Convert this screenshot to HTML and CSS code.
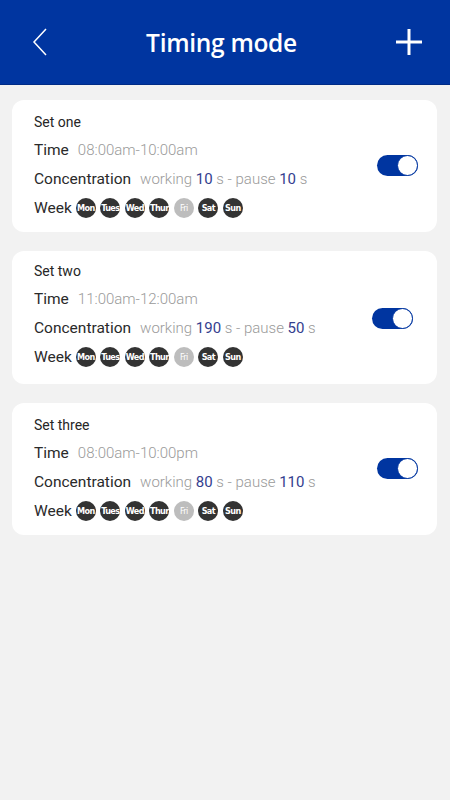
FILE: index.html
```html
<!DOCTYPE html>
<html lang="en">
<head>
    <meta charset="UTF-8">
    <meta name="viewport" content="width=device-width, initial-scale=1.0">
    <title>Timing mode</title>
    <link rel="stylesheet" href="styles.css">
</head>
<body>
    <div class="header">
        <button class="icon-btn back-btn" aria-label="Back">
            <svg width="16" height="28" viewBox="0 0 16 28">
                <polyline points="14,1 2,14 14,27" fill="none" stroke="#fff" stroke-width="1.5"/>
            </svg>
        </button>
        <h1>Timing mode</h1>
        <button class="icon-btn add-btn" aria-label="Add">
            <svg width="28" height="28" viewBox="0 0 28 28">
                <line x1="14" y1="1" x2="14" y2="27" stroke="#fff" stroke-width="3"/>
                <line x1="1" y1="14" x2="27" y2="14" stroke="#fff" stroke-width="3"/>
            </svg>
        </button>
    </div>

    <div class="list">
        <div class="set-card">
            <div class="set-info">
                <div class="set-title">Set one</div>
                <div class="row"><span class="label">Time</span><span class="value">08:00am-10:00am</span></div>
                <div class="row"><span class="label">Concentration</span><span class="value">working <b>10</b> s - pause <b>10</b> s</span></div>
                <div class="row week-row">
                    <span class="label">Week</span>
                    <div class="days">
                        <span class="day">Mon</span><span class="day">Tues</span><span class="day">Wed</span><span class="day">Thur</span><span class="day off">Fri</span><span class="day">Sat</span><span class="day">Sun</span>
                    </div>
                </div>
            </div>
            <div class="switch on"><div class="knob"></div></div>
        </div>

        <div class="set-card raised">
            <div class="set-info">
                <div class="set-title">Set two</div>
                <div class="row"><span class="label">Time</span><span class="value">11:00am-12:00am</span></div>
                <div class="row"><span class="label">Concentration</span><span class="value">working <b>190</b> s - pause <b>50</b> s</span></div>
                <div class="row week-row">
                    <span class="label">Week</span>
                    <div class="days">
                        <span class="day">Mon</span><span class="day">Tues</span><span class="day">Wed</span><span class="day">Thur</span><span class="day off">Fri</span><span class="day">Sat</span><span class="day">Sun</span>
                    </div>
                </div>
            </div>
            <div class="switch on"><div class="knob"></div></div>
        </div>

        <div class="set-card">
            <div class="set-info">
                <div class="set-title">Set three</div>
                <div class="row"><span class="label">Time</span><span class="value">08:00am-10:00pm</span></div>
                <div class="row"><span class="label">Concentration</span><span class="value">working <b>80</b> s - pause <b>110</b> s</span></div>
                <div class="row week-row">
                    <span class="label">Week</span>
                    <div class="days">
                        <span class="day">Mon</span><span class="day">Tues</span><span class="day">Wed</span><span class="day">Thur</span><span class="day off">Fri</span><span class="day">Sat</span><span class="day">Sun</span>
                    </div>
                </div>
            </div>
            <div class="switch on"><div class="knob"></div></div>
        </div>
    </div>
</body>
</html>
```

FILE: styles.css
```css
* {
    margin: 0;
    padding: 0;
    box-sizing: border-box;
}

body {
    font-family: Roboto, 'Noto Sans', sans-serif;
    background: #f2f2f2;
    min-height: 100vh;
}

.header {
    height: 85px;
    background: #0035a0;
    border-bottom: 1px solid #002b86;
    display: flex;
    align-items: center;
    justify-content: space-between;
    padding: 0 27px 0 32px;
}

.header h1 {
    color: #fff;
    font-family: 'Open Sans', sans-serif;
    font-weight: 600;
    font-size: 24.5px;
    letter-spacing: -0.3px;
}

.icon-btn {
    background: none;
    border: none;
    display: flex;
    cursor: pointer;
}

.list {
    padding: 15px 13px 0 12px;
    display: flex;
    flex-direction: column;
    gap: 19px;
}

.set-card {
    background: #fff;
    border-radius: 12px;
    height: 132px;
    padding: 13px 19px 14px 22px;
    display: flex;
    align-items: center;
    justify-content: space-between;
}

.set-card.raised {
    height: 133px;
    padding: 10px 24px 17px 22px;
}

.set-card.raised .switch {
    margin-top: 8px;
}

.set-info {
    display: flex;
    flex-direction: column;
    gap: 9px;
}

.set-title {
    font-size: 14px;
    line-height: 18px;
    color: #262626;
}

.row {
    display: flex;
    align-items: center;
    height: 20px;
    font-size: 15.5px;
    white-space: nowrap;
}

.label {
    color: #2a2a2a;
    margin-right: 9px;
}

.value {
    color: #9a9a9a;
    font-size: 15px;
    font-weight: 300;
}

.value b {
    font-weight: 400;
    color: #34408f;
}

.week-row .label {
    margin-right: 4px;
}

.days {
    display: flex;
    gap: 4.5px;
}

.day {
    width: 20px;
    height: 20px;
    border-radius: 50%;
    background: #333;
    color: #fff;
    font-family: 'DejaVu Sans Condensed', 'DejaVu Sans', sans-serif;
    font-size: 9px;
    font-weight: bold;
    letter-spacing: -0.6px;
    display: flex;
    align-items: center;
    justify-content: center;
}

.day.off {
    background: #bdbdbd;
    font-weight: normal;
}

.switch {
    width: 41px;
    height: 21px;
    border-radius: 11px;
    background: #0035a0;
    display: flex;
    justify-content: flex-end;
    flex-shrink: 0;
}

.switch .knob {
    width: 21px;
    height: 21px;
    border-radius: 50%;
    background: #fff;
    border: 1.5px solid #0035a0;
}
```
